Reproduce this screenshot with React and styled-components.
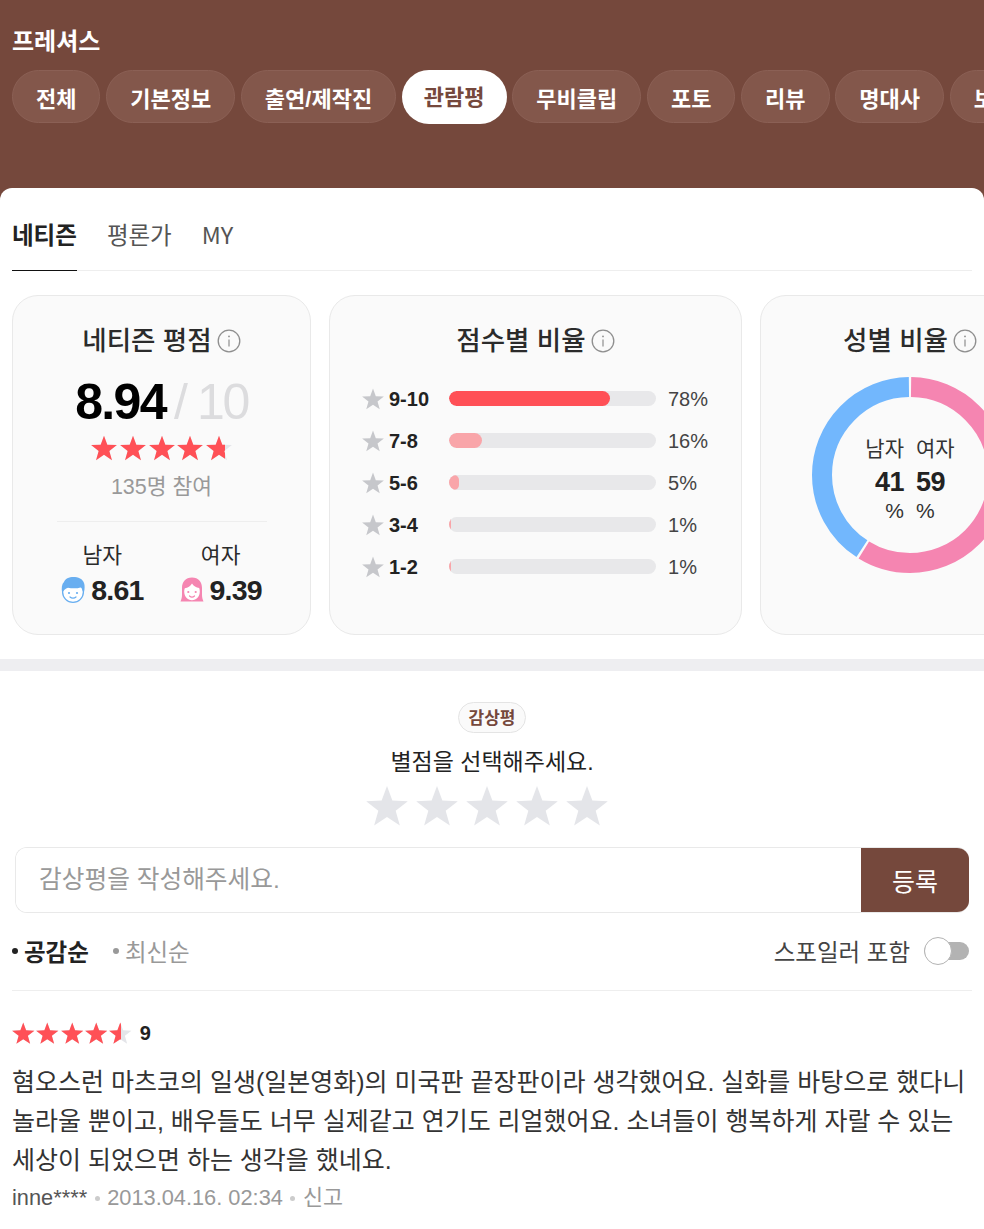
import React from "react";
import styled, { createGlobalStyle } from "styled-components";

const BRAND = "#75483c";
const RED = "#ff5056";

const tabs = ["전체", "기본정보", "출연/제작진", "관람평", "무비클립", "포토", "리뷰", "명대사", "보기"];
const scores = [
  { label: "9-10", pct: 78, top: true },
  { label: "7-8", pct: 16 },
  { label: "5-6", pct: 5 },
  { label: "3-4", pct: 1 },
  { label: "1-2", pct: 1 },
];

const STAR = "M12 .6L15.06 8.89 23.89 9.24 16.95 14.71 19.35 23.21 12 18.3 4.65 23.21 7.05 14.71 .11 9.24 8.94 8.89Z";

const StarIcon = ({ size, color }) => (
  <svg width={size} height={size} viewBox="0 0 24 24" style={{ flex: "none", display: "block" }}>
    <path d={STAR} fill={color} />
  </svg>
);

const StarRating = ({ size, gap, percent }) => (
  <StarBox $gap={gap}>
    {[0, 1, 2, 3, 4].map((i) => (
      <StarIcon key={i} size={size} color="#e4e5e9" />
    ))}
    <StarFill $gap={gap} style={{ width: `${percent}%` }}>
      {[0, 1, 2, 3, 4].map((i) => (
        <StarIcon key={i} size={size} color={RED} />
      ))}
    </StarFill>
  </StarBox>
);

const InfoIcon = () => (
  <InfoSvg width="24" height="24" viewBox="0 0 24 24" fill="none">
    <circle cx="12" cy="12" r="10.8" stroke="#8e8e8e" strokeWidth="1.3" />
    <path d="M12 10.5v7" stroke="#8e8e8e" strokeWidth="1.2" />
    <circle cx="12" cy="7.4" r="0.9" fill="#8e8e8e" />
  </InfoSvg>
);

const ManIcon = () => (
  <svg width="24" height="28" viewBox="0 0 24 28">
    <circle cx="12" cy="16" r="10.4" fill="#fff" stroke="#68aef0" strokeWidth="1.300" />
    <path
      d="M1.200 17C.2 12 .8 8 3 6 4 2.500 9 .5 14 1c5 .5 9 3 9.500 8 .3 3 0 6-1 8.500-.4-2.500-1.200-4.500-2.500-6-3.500 1-9 1.200-13 .2C4.500 12.500 2.200 14.500 1.200 17z"
      fill="#68aef0"
    />
    <circle cx="8" cy="17" r="1.100" fill="#68aef0" />
    <circle cx="16" cy="17" r="1.100" fill="#68aef0" />
    <path d="M9 21c1.600 1.500 4.400 1.500 6 0" stroke="#68aef0" strokeWidth="1.200" fill="none" strokeLinecap="round" />
  </svg>
);

const WomanIcon = () => (
  <svg width="24" height="28" viewBox="0 0 24 28">
    <path
      d="M12 1.500C5.500 1.500 2 6 2 12v7c0 2.500-.7 4.500-1.500 6.500h23c-.8-2-1.500-4-1.500-6.500v-7c0-6-3.500-10.500-10-10.500z"
      fill="#f585b1"
    />
    <path
      d="M12 7.500c1.500 2.600 4.200 4.200 7.200 4.600.4 1 .6 2.200.6 3.400 0 4.800-3.400 8.800-7.800 8.800s-7.800-4-7.800-8.800c0-1.200.2-2.300.6-3.300 3-.5 5.800-2 7.200-4.700z"
      fill="#fff"
    />
    <circle cx="8.300" cy="16" r="1.100" fill="#f585b1" />
    <circle cx="15.700" cy="16" r="1.100" fill="#f585b1" />
    <path d="M9.500 20c1.400 1.200 3.600 1.200 5 0" stroke="#f585b1" strokeWidth="1.200" fill="none" strokeLinecap="round" />
  </svg>
);

const Donut = () => (
  <DonutSvg width="198" height="198" viewBox="0 0 198 198">
    <g transform="rotate(-90 99 99)" fill="none" strokeWidth="20">
      <circle cx="99" cy="99" r="88" stroke="#f585b1" pathLength="100" strokeDasharray="58.600 41.400" strokeDashoffset="-0.200" />
      <circle cx="99" cy="99" r="88" stroke="#72b7fd" pathLength="100" strokeDasharray="40.600 59.400" strokeDashoffset="-59.200" />
    </g>
  </DonutSvg>
);

const App = () => (
  <Page>
    <GlobalStyle />
    <Header>
      <MovieTitle>프레셔스</MovieTitle>
      <TabBar>
        {tabs.map((tab) => (
          <TabPill key={tab} $active={tab === "관람평"}>
            {tab}
          </TabPill>
        ))}
      </TabBar>
    </Header>

    <Sheet>
      <SubTabs>
        <SubTab $active>네티즌</SubTab>
        <SubTab>평론가</SubTab>
        <SubTab>MY</SubTab>
      </SubTabs>

      <CardRow>
        <Card $width={299}>
          <CardTitle>
            네티즌 평점
            <InfoIcon />
          </CardTitle>
          <ScoreLine>
            <BigScore>8.94</BigScore>
            <ScoreMax>/ 10</ScoreMax>
          </ScoreLine>
          <StarRating size={26} gap={2.6} percent={95} />
          <Participants>135명 참여</Participants>
          <GenderSplit>
            <GenderCol>
              <GenderName>남자</GenderName>
              <GenderScore>
                <ManIcon />
                8.61
              </GenderScore>
            </GenderCol>
            <GenderCol>
              <GenderName>여자</GenderName>
              <GenderScore>
                <WomanIcon />
                9.39
              </GenderScore>
            </GenderCol>
          </GenderSplit>
        </Card>

        <Card $width={413}>
          <CardTitle>
            점수별 비율
            <InfoIcon />
          </CardTitle>
          <ScoreList>
            {scores.map((s) => (
              <ScoreRow key={s.label}>
                <StarIcon size={22} color="#c6c7cb" />
                <ScoreLabel>{s.label}</ScoreLabel>
                <BarTrack>
                  <BarFill $top={s.top} style={{ width: `${s.pct}%` }} />
                </BarTrack>
                <ScorePct>{s.pct}%</ScorePct>
              </ScoreRow>
            ))}
          </ScoreList>
        </Card>

        <Card $width={300}>
          <CardTitle>
            성별 비율
            <InfoIcon />
          </CardTitle>
          <DonutWrap>
            <Donut />
            <DonutLabels>
              <DonutCol $align="flex-end">
                <DonutName>남자</DonutName>
                <DonutNum>41</DonutNum>
                <DonutUnit>%</DonutUnit>
              </DonutCol>
              <DonutCol $align="flex-start">
                <DonutName>여자</DonutName>
                <DonutNum>59</DonutNum>
                <DonutUnit>%</DonutUnit>
              </DonutCol>
            </DonutLabels>
          </DonutWrap>
        </Card>
      </CardRow>
    </Sheet>

    <Band />

    <ReviewSection>
      <WriteArea>
        <Badge>감상평</Badge>
        <Prompt>별점을 선택해주세요.</Prompt>
        <PickStars>
          {[0, 1, 2, 3, 4].map((i) => (
            <StarIcon key={i} size={42} color="#e4e5e9" />
          ))}
        </PickStars>
      </WriteArea>
      <InputRow>
        <ReviewInput placeholder="감상평을 작성해주세요." />
        <SubmitButton>등록</SubmitButton>
      </InputRow>
      <SortRow>
        <SortOption $active>공감순</SortOption>
        <SortOption>최신순</SortOption>
        <SpoilerLabel>스포일러 포함</SpoilerLabel>
        <Toggle>
          <ToggleKnob />
        </Toggle>
      </SortRow>
      <Review>
        <ReviewScore>
          <StarRating size={22.500} gap={1.800} percent={91} />
          <ReviewNum>9</ReviewNum>
        </ReviewScore>
        <ReviewText>
          혐오스런 마츠코의 일생(일본영화)의 미국판 끝장판이라 생각했어요. 실화를 바탕으로 했다니 놀라울 뿐이고, 배우들도 너무 실제같고 연기도 리얼했어요. 소녀들이 행복하게 자랄 수 있는 세상이 되었으면 하는 생각을 했네요.
        </ReviewText>
        <ReviewMeta>
          <MetaUser>inne****</MetaUser>
          <MetaDot />
          <span>2013.04.16. 02:34</span>
          <MetaDot />
          <span>신고</span>
        </ReviewMeta>
      </Review>
    </ReviewSection>
  </Page>
);

export default App;

const GlobalStyle = createGlobalStyle`
  html, body {
    margin: 0;
    padding: 0;
    background: #fff;
    overflow: hidden;
  }
  * {
    box-sizing: border-box;
  }
  body {
    font-family: "Liberation Sans", "Noto Sans CJK KR", sans-serif;
    color: #222;
  }
`;

const Page = styled.div`
  width: 984px;
  height: 1229px;
  overflow: hidden;
  background: ${BRAND};
`;

const Header = styled.header`
  height: 188px;
  padding: 26px 0 0 12px;
  overflow: hidden;
`;

const MovieTitle = styled.h1`
  margin: 0;
  height: 30px;
  line-height: 32px;
  font-size: 24px;
  font-weight: 700;
  color: #fff;
`;

const TabBar = styled.nav`
  display: flex;
  align-items: flex-start;
  gap: 5.700px;
  margin-top: 14px;
`;

const TabPill = styled.div`
  flex: none;
  height: ${(p) => (p.$active ? "54px" : "53px")};
  line-height: ${(p) => (p.$active ? "56px" : "57px")};
  padding: 0 ${(p) => (p.$active ? "22px" : "23px")};
  border-radius: 27px;
  font-size: 22px;
  font-weight: 700;
  color: ${(p) => (p.$active ? BRAND : "#fff")};
  background: ${(p) => (p.$active ? "#fff" : "#83574b")};
  border: ${(p) => (p.$active ? "none" : "1px solid #8b6055")};
`;

const Sheet = styled.section`
  background: #fff;
  border-radius: 12px 12px 0 0;
  padding: 0 0 24px 12px;
  overflow: hidden;
`;

const SubTabs = styled.div`
  display: flex;
  gap: 30px;
  width: 960px;
  height: 83px;
  border-bottom: 1px solid #eeeeee;
`;

const SubTab = styled.div`
  height: 83px;
  line-height: 93px;
  font-family: "Noto Sans CJK KR", "Liberation Sans", sans-serif;
  font-size: 23.500px;
  font-weight: ${(p) => (p.$active ? 700 : 400)};
  color: ${(p) => (p.$active ? "#222" : "#555")};
  border-bottom: ${(p) => (p.$active ? "1px solid #111" : "none")};
`;

const CardRow = styled.div`
  display: flex;
  gap: 18px;
  margin-top: 24px;
`;

const Card = styled.article`
  flex: none;
  width: ${(p) => p.$width}px;
  height: 340px;
  padding-top: 26px;
  display: flex;
  flex-direction: column;
  align-items: center;
  background: #fafafa;
  border: 1px solid #e9e9e9;
  border-radius: 26px;
`;

const CardTitle = styled.h2`
  margin: 0;
  height: 32px;
  display: flex;
  align-items: center;
  gap: 5px;
  font-size: 26.500px;
  font-weight: 500;
  color: #2b2b2b;
  white-space: pre;
`;

const InfoSvg = styled.svg`
  margin-top: 5px;
`;

const ScoreLine = styled.div`
  display: flex;
  align-items: baseline;
  gap: 8px;
  margin: 21px 0 6px;
  height: 54px;
  line-height: 54px;
  letter-spacing: -1.600px;
`;

const BigScore = styled.span`
  font-size: 50px;
  font-weight: 700;
  color: #000;
`;

const ScoreMax = styled.span`
  font-size: 50px;
  letter-spacing: -2.400px;
  color: #dcdcde;
`;

const StarBox = styled.div`
  position: relative;
  display: flex;
  flex: none;
  gap: ${(p) => p.$gap}px;
`;

const StarFill = styled.div`
  position: absolute;
  top: 0;
  left: 0;
  display: flex;
  gap: ${(p) => p.$gap}px;
  overflow: hidden;
`;

const Participants = styled.div`
  margin-top: 11px;
  font-size: 21.500px;
  line-height: 30px;
  color: #999;
`;

const GenderSplit = styled.div`
  display: flex;
  justify-content: center;
  gap: 36px;
  width: 210px;
  margin-top: 19px;
  padding-top: 18px;
  border-top: 1px solid #eeeeee;
`;

const GenderCol = styled.div`
  display: flex;
  flex-direction: column;
  align-items: center;
`;

const GenderName = styled.div`
  font-size: 21.500px;
  line-height: 32px;
  color: #2b2b2b;
`;

const GenderScore = styled.div`
  display: flex;
  align-items: center;
  gap: 6px;
  font-size: 28.500px;
  font-weight: 700;
  line-height: 36px;
  letter-spacing: -0.800px;
  color: #222;
`;

const ScoreList = styled.div`
  display: flex;
  flex-direction: column;
  gap: 12px;
  width: 100%;
  margin-top: 30px;
  padding: 0 32px;
`;

const ScoreRow = styled.div`
  display: flex;
  align-items: center;
  height: 30px;
`;

const ScoreLabel = styled.span`
  width: 60px;
  margin-left: 5px;
  font-size: 20px;
  font-weight: 700;
  color: #222;
`;

const BarTrack = styled.div`
  width: 207px;
  height: 15px;
  margin-top: -1px;
  border-radius: 8px;
  background: #e8e8ea;
  overflow: hidden;
`;

const BarFill = styled.div`
  height: 100%;
  border-radius: 8px;
  background: ${(p) => (p.$top ? RED : "#f9a5a9")};
`;

const ScorePct = styled.span`
  margin-left: 12px;
  font-size: 20px;
  color: #444;
`;

const DonutWrap = styled.div`
  position: relative;
  margin-top: 22px;
  width: 198px;
  height: 198px;
`;

const DonutSvg = styled.svg`
  display: block;
`;

const DonutLabels = styled.div`
  position: absolute;
  inset: 0;
  padding-top: 6px;
  display: flex;
  justify-content: center;
  align-items: center;
  gap: 12px;
`;

const DonutCol = styled.div`
  display: flex;
  flex-direction: column;
  align-items: ${(p) => p.$align};
`;

const DonutName = styled.span`
  font-size: 21px;
  line-height: 30px;
  color: #333;
`;

const DonutNum = styled.strong`
  font-size: 27px;
  line-height: 36px;
  letter-spacing: -0.500px;
  color: #222;
`;

const DonutUnit = styled.span`
  font-size: 21px;
  line-height: 22px;
  color: #333;
`;

const Band = styled.div`
  height: 12px;
  background: #eeeef1;
`;

const ReviewSection = styled.section`
  background: #fff;
  height: 558px;
  padding-top: 31px;
`;

const WriteArea = styled.div`
  display: flex;
  flex-direction: column;
  align-items: center;
`;

const Badge = styled.div`
  height: 31px;
  padding: 0 9.500px;
  line-height: 31px;
  font-size: 17px;
  font-weight: 700;
  color: ${BRAND};
  background: #fafafa;
  border: 1px solid #e4e4e4;
  border-radius: 16px;
`;

const Prompt = styled.div`
  margin-top: 13px;
  height: 32px;
  line-height: 32px;
  font-size: 23px;
  color: #222;
`;

const PickStars = styled.div`
  display: flex;
  gap: 8px;
  margin: 7px 11px 0 0;
`;

const InputRow = styled.div`
  display: flex;
  height: 66px;
  margin: 20px 15px 0;
  border: 1px solid #e9e9e9;
  border-right: none;
  border-radius: 12px;
  overflow: hidden;
`;

const ReviewInput = styled.input`
  flex: 1;
  min-width: 0;
  border: none;
  outline: none;
  padding: 0 23px;
  font-family: inherit;
  font-size: 24.700px;
  background: #fff;
  &::placeholder {
    color: #999;
  }
`;

const SubmitButton = styled.button`
  flex: none;
  width: 108px;
  margin: -1px 0;
  border: none;
  font-family: inherit;
  font-size: 25px;
  color: #fff;
  background: ${BRAND};
`;

const SortRow = styled.div`
  display: flex;
  align-items: center;
  height: 77px;
  padding-bottom: 2px;
  margin: 0 15px 0 12px;
`;

const SortOption = styled.div`
  display: flex;
  align-items: center;
  gap: 6px;
  margin-right: 24px;
  font-size: 23.500px;
  font-weight: ${(p) => (p.$active ? 700 : 400)};
  color: ${(p) => (p.$active ? "#222" : "#999")};
  &::before {
    content: "";
    width: 6px;
    height: 6px;
    border-radius: 50%;
    background: ${(p) => (p.$active ? "#222" : "#999")};
  }
`;

const SpoilerLabel = styled.span`
  margin-left: auto;
  font-size: 23.500px;
  color: #444;
`;

const Toggle = styled.div`
  position: relative;
  width: 45px;
  height: 18px;
  margin-left: 14px;
  border-radius: 9px;
  background: #b3b3b3;
`;

const ToggleKnob = styled.div`
  position: absolute;
  top: -5px;
  left: 0;
  width: 28px;
  height: 28px;
  border-radius: 50%;
  background: #fff;
  border: 1px solid #b3b3b3;
`;

const Review = styled.article`
  margin: 0 12px;
  padding-top: 30px;
  border-top: 1px solid #eeeeee;
`;

const ReviewScore = styled.div`
  display: flex;
  align-items: center;
  gap: 8px;
  height: 24px;
`;

const ReviewNum = styled.strong`
  font-size: 20px;
  color: #222;
`;

const ReviewText = styled.p`
  margin: 18px 0 0;
  font-size: 25px;
  line-height: 39px;
  color: #333;
`;

const ReviewMeta = styled.div`
  display: flex;
  align-items: center;
  gap: 7.500px;
  margin-top: 3px;
  font-size: 21.800px;
  line-height: 30px;
  color: #999;
`;

const MetaUser = styled.span`
  color: #555;
`;

const MetaDot = styled.i`
  width: 5px;
  height: 5px;
  border-radius: 50%;
  background: #ccc;
`;
